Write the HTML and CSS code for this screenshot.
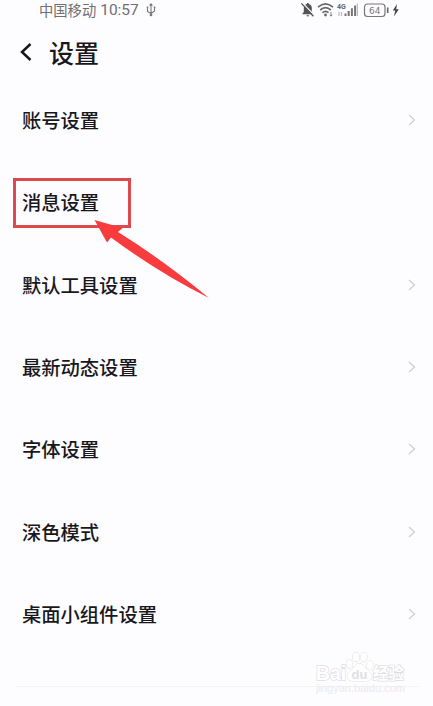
FILE: index.html
```html
<!DOCTYPE html>
<html lang="zh-CN">
<head>
    <meta charset="UTF-8">
    <meta name="viewport" content="width=device-width, initial-scale=1.0">
    <title>设置</title>
    <link rel="stylesheet" href="styles.css">
</head>
<body>
    <div class="status-bar">
        <span class="carrier">中国移动</span>
        <span class="time">10:57</span>
        <svg class="usb" width="10" height="14" viewBox="0 0 10 14" fill="none" stroke="#777" stroke-width="1.1">
            <path d="M5 1v12M1.5 4v4.5L5 10.5 8.5 8V4M3.6 2.6 5 .9l1.4 1.7"/>
            <circle cx="5" cy="12" r=".8" fill="#777"/>
            <path d="M.6 4h1.8M7.6 4h1.8"/>
        </svg>
        <!-- Glocke, WLAN, Signal, Akku -->
        <svg class="status-icons" width="102" height="20" viewBox="0 0 102 20">
            <path d="M2 14.2 3.8 12V8a4.2 4.2 0 0 1 3-4l.3-1h1.4l.3 1a4.2 4.2 0 0 1 3 4v4l1.8 2.2z" fill="#555"/>
            <path d="M6.2 15.2h3.2l-1.6 1.6z" fill="#555"/>
            <path d="M2.6 3 14 15" stroke="#fdfcff" stroke-width="1.2"/>
            <path d="M1.4 3.4 13.4 16.2" stroke="#555" stroke-width="1.3"/>
            <g fill="none" stroke="#666" stroke-width="1.7">
                <path d="M18 7.2q7.5-6.6 15 0"/>
                <path d="M20.2 10q5.3-4.6 10.6 0"/>
                <path d="M22.5 12.7q3-2.6 6 0"/>
            </g>
            <circle cx="25.5" cy="15" r="1.4" fill="#666"/>
            <path d="M31 12v4M29.8 14.8 31 16.2l1.2-1.4" fill="none" stroke="#777" stroke-width=".9"/>
            <text class="net" x="37" y="8.5">4G</text>
            <path d="M39 12v4M41.5 12v4" stroke="#bbb" stroke-width="1.2"/>
            <path d="M45.5 13.5V16M48.7 11V16M51.9 8.3V16M55.1 5.6V16" stroke="#777" stroke-width="2"/>
            <path d="M57.3 3.5V16" stroke="#aaa" stroke-width="1"/>
            <rect x="64.5" y="4" width="20.5" height="12.5" rx="3" fill="none" stroke="#777" stroke-width="1.2"/>
            <text class="level" x="74.8" y="13.8">64</text>
            <path d="M87.7 7.5v5.5" stroke="#666" stroke-width="1.6"/>
            <path d="m97 4-4.2 6.6h2.4L94 16.5l4.8-7.2h-2.6z" fill="#444"/>
        </svg>
    </div>

    <div class="header">
        <svg class="back" width="14" height="20" viewBox="0 0 14 20" fill="none" stroke="#18181c" stroke-width="2.5">
            <path d="M11.5 2 3 10l8.5 8"/>
        </svg>
        <h1>设置</h1>
    </div>

    <ul class="settings">
        <li class="row">
            <span>账号设置</span>
            <svg class="chevron" viewBox="0 0 8 12"><path d="m1 1 5.5 5L1 11"/></svg>
        </li>
        <li class="row">
            <span>消息设置</span>
            <div class="marker"></div>
            <svg class="arrow" width="120" height="82" viewBox="0 0 120 82">
                <path d="M1.5 2 29.5 10 25 14 Q70 42 116 80 Q66 55 18 19.5 L14 24.5z"/>
            </svg>
        </li>
        <li class="row">
            <span>默认工具设置</span>
            <svg class="chevron" viewBox="0 0 8 12"><path d="m1 1 5.5 5L1 11"/></svg>
        </li>
        <li class="row">
            <span>最新动态设置</span>
            <svg class="chevron" viewBox="0 0 8 12"><path d="m1 1 5.5 5L1 11"/></svg>
        </li>
        <li class="row">
            <span>字体设置</span>
            <svg class="chevron" viewBox="0 0 8 12"><path d="m1 1 5.5 5L1 11"/></svg>
        </li>
        <li class="row">
            <span>深色模式</span>
            <svg class="chevron" viewBox="0 0 8 12"><path d="m1 1 5.5 5L1 11"/></svg>
        </li>
        <li class="row">
            <span>桌面小组件设置</span>
            <svg class="chevron" viewBox="0 0 8 12"><path d="m1 1 5.5 5L1 11"/></svg>
        </li>
    </ul>
    <div class="divider"></div>

    <svg class="watermark" width="100" height="50" viewBox="0 0 100 50">
        <text class="brand" x="5" y="31" textLength="30" lengthAdjust="spacingAndGlyphs">Bai</text>
        <g class="paw">
            <ellipse cx="38.5" cy="15" rx="3" ry="4.2" transform="rotate(-12 38.5 15)"/>
            <ellipse cx="45" cy="8" rx="3.2" ry="4.6"/>
            <ellipse cx="52.8" cy="8" rx="3.2" ry="4.6" transform="rotate(10 52.8 8)"/>
            <ellipse cx="59" cy="16" rx="3.2" ry="4.2" transform="rotate(15 59 16)"/>
            <path d="M48.5 14.500c4 0 5 4 8 6.500s5 5 4 8c-1.500 3.800-6 3-12 3s-10.500.8-12-3c-1-3 1-5.500 4-8s4-6.500 8-6.500z"/>
        </g>
        <text class="du" x="48.5" y="30">du</text>
        <text class="exp" x="62" y="30" textLength="31">经验</text>
        <text class="url" x="5" y="43" textLength="89">jingyan.baidu.com</text>
    </svg>
</body>
</html>
```
FILE: styles.css
```css
body {
    font-family: "Noto Sans CJK SC", sans-serif;
    margin: 0;
    height: 706px;
    background-color: #fdfcff;
    color: #18181c;
    position: relative;
    overflow: hidden;
}
.status-bar {
    display: flex;
    align-items: center;
    height: 20px;
    padding: 0 31px 0 39px;
    color: #707070;
    font-size: 14.3px;
    line-height: 20px;
}
.time {
    margin-left: 4px;
    font-family: Roboto, sans-serif;
    font-size: 15.5px;
}
.usb {
    margin-left: 7px;
}
.status-icons {
    margin-left: auto;
}
.net {
    font: bold 7px Roboto, sans-serif;
    fill: #666;
}
.level {
    font: 9px "DejaVu Sans", sans-serif;
    text-anchor: middle;
    fill: #777;
}

.header {
    display: flex;
    align-items: center;
    height: 60px;
    padding: 4px 0 0 19px;
    box-sizing: border-box;
}
.header h1 {
    margin: 0 0 0 16px;
    font-size: 25px;
    font-weight: 500;
    line-height: 36px;
}

.settings {
    list-style: none;
    margin: -1px 0 0;
    padding: 0;
}
.row {
    display: flex;
    align-items: center;
    justify-content: space-between;
    height: 82.3px;
    padding: 0 17px 0 22px;
    font-size: 19.3px;
    font-weight: 500;
    position: relative;
}
.chevron {
    width: 8px;
    height: 12px;
    fill: none;
    stroke: #cfcfd4;
    stroke-width: 1.3;
}
.divider {
    height: 1px;
    margin: 31px 14px 0 16px;
    background-color: #f3f2f5;
}

/* Rote Markierung mit Pfeil */
.marker {
    position: absolute;
    left: 13px;
    top: 17px;
    width: 112px;
    height: 44px;
    border: 3px solid #dc4a4e;
}
.arrow {
    position: absolute;
    left: 93px;
    top: 57px;
    z-index: 1;
    fill: #f83b3d;
}

.watermark {
    position: absolute;
    left: 311px;
    top: 649px;
}
.watermark text,
.paw {
    fill: #fff;
    stroke: #dfdee2;
    stroke-width: 1.4;
    paint-order: stroke;
}
.paw {
    stroke-width: 1;
}
.brand {
    font: bold 20px "Liberation Sans", sans-serif;
}
.watermark .du {
    font: bold 13px "Liberation Sans", sans-serif;
    text-anchor: middle;
    fill: #dfdee2;
    stroke: none;
}
.exp {
    font: bold 15.5px "Noto Sans CJK SC", sans-serif;
}
.watermark .url {
    font: 11px "Liberation Sans", sans-serif;
    fill: #ebeaee;
    stroke: none;
}
```
